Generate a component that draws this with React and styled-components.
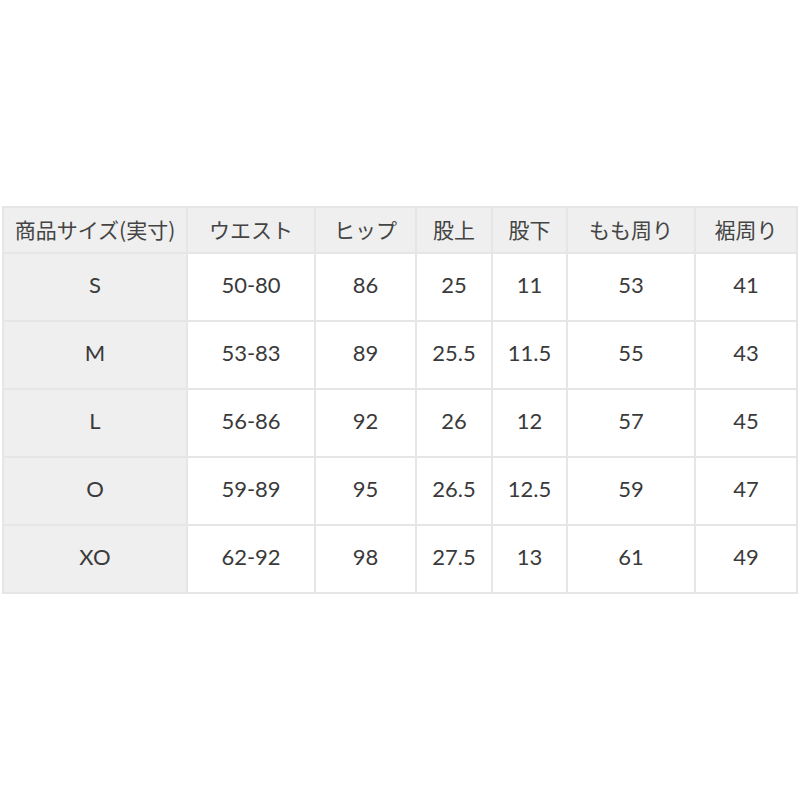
import React from "react";
import styled, { createGlobalStyle } from "styled-components";

const Global = createGlobalStyle`
  html, body { margin: 0; padding: 0; background: #fff; }
  body { font-family: Lato, "Noto Sans CJK JP", sans-serif; }
`;

const Page = styled.div`
  min-height: 800px;
  display: flex;
  align-items: center;
  padding-left: 2px;
  box-sizing: border-box;
`;

const Table = styled.table`
  border-collapse: collapse;
  table-layout: fixed;
  width: 794px;
  border: 2px solid #e6e6e6;
  color: #3a3a3a;
`;

const HeadCell = styled.th`
  height: 41px;
  padding: 0 0 3px;
  background: #efefef;
  border: 2px solid #e6e6e6;
  font-family: "Noto Sans CJK JP", sans-serif;
  font-weight: 400;
  font-size: 21px;
  text-align: center;
  white-space: nowrap;
  color: #444;
`;

const Cell = styled.td`
  height: 61px;
  padding: 0 0 5px;
  border: 2px solid #e6e6e6;
  background: ${(p) => (p.$label ? "#efefef" : "#fff")};
  font-family: Lato, "Noto Sans CJK JP", sans-serif;
  font-size: 22px;
  text-align: center;
  color: #3a3a3a;
`;

const widths = [184, 128, 101, 76, 75, 128, 102];
const headers = ["商品サイズ(実寸)", "ウエスト", "ヒップ", "股上", "股下", "もも周り", "裾周り"];
const rows = [
  ["S", "50-80", "86", "25", "11", "53", "41"],
  ["M", "53-83", "89", "25.5", "11.5", "55", "43"],
  ["L", "56-86", "92", "26", "12", "57", "45"],
  ["O", "59-89", "95", "26.5", "12.5", "59", "47"],
  ["XO", "62-92", "98", "27.5", "13", "61", "49"],
];

export default function App() {
  return (
    <>
      <Global />
      <Page>
        <Table>
          <colgroup>
            {widths.map((w, i) => (
              <col key={i} style={{ width: w }} />
            ))}
          </colgroup>
          <thead>
            <tr>
              {headers.map((h) => (
                <HeadCell key={h}>{h}</HeadCell>
              ))}
            </tr>
          </thead>
          <tbody>
            {rows.map((r) => (
              <tr key={r[0]}>
                {r.map((c, i) => (
                  <Cell key={i} $label={i === 0}>
                    {c}
                  </Cell>
                ))}
              </tr>
            ))}
          </tbody>
        </Table>
      </Page>
    </>
  );
}
